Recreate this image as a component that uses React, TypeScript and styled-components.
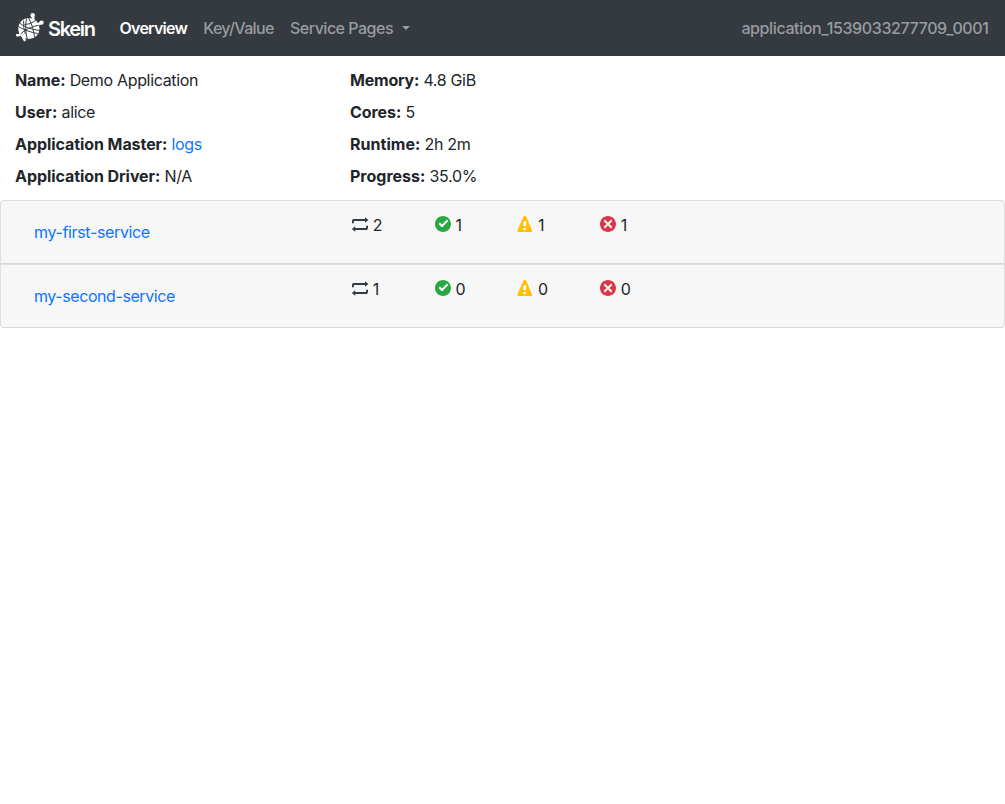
import React from "react";
import styled, { createGlobalStyle } from "styled-components";

const GlobalStyle = createGlobalStyle`
  * { box-sizing: border-box; }
  body { margin: 0; background: #fff; color: #212529; font: 400 16px/24px Inter, "Liberation Sans", sans-serif; }
  a { color: #0c74ff; text-decoration: none; }
`;

const Navbar = styled.nav`
  height: 56px;
  padding: 0 16px;
  display: flex;
  align-items: center;
  background: #343a40;
`;

const Brand = styled.a`
  display: flex;
  align-items: center;
  gap: 4px;
  margin-right: 15.5px;
  svg { display: block; flex: none; margin-top: -2px; }
`;

const BrandName = styled.span`
  width: 48px;
  color: #fff;
  font-size: 20px;
  font-weight: 600;
  line-height: 30px;
  letter-spacing: -1.3px;
  white-space: nowrap;
  padding-top: 2px;
`;

const NavLink = styled.a<{ $active?: boolean; $width: number; $spacing: number }>`
  width: ${(p) => p.$width}px;
  padding: 0 8px;
  white-space: nowrap;
  font-weight: ${(p) => (p.$active ? 600 : 500)};
  letter-spacing: ${(p) => p.$spacing}px;
  && { color: ${(p) => (p.$active ? "#fff" : "#999c9f")}; }
`;

const Caret = styled.span`
  display: inline-block;
  margin-left: 9px;
  vertical-align: 4px;
  border-top: 4.8px solid;
  border-right: 4.8px solid transparent;
  border-left: 4.8px solid transparent;
`;

const AppId = styled.span`
  margin-left: auto;
  margin-right: 0.5px;
  color: #999c9f;
  font-weight: 500;
  letter-spacing: -0.38px;
`;

const Summary = styled.section`
  display: grid;
  grid-template-columns: 335px 1fr;
  padding: 12px 15px;
  row-gap: 8px;
  height: 144px;
`;

const Fact = styled.div<{ $label: number }>`
  white-space: nowrap;
  letter-spacing: -0.33px;
  strong { font-weight: 700; letter-spacing: ${(p) => p.$label}px; }
`;

const Card = styled.div`
  height: 64px;
  display: grid;
  grid-template-columns: 336px repeat(4, 82.66px);
  padding: 12px 15px;
  background: #f7f7f7;
  border: 1px solid #dfdfdf;
  border-bottom-color: #d8d8d8;
  &:first-child { border-radius: 4px 4px 0 0; }
  &:last-child { border-radius: 0 0 4px 4px; }
`;

const ServiceLink = styled.a<{ $spacing: number }>`
  padding: 7px 18px;
  letter-spacing: ${(p) => p.$spacing}px;
`;

const Count = styled.div`
  display: flex;
  align-items: flex-start;
  gap: 4.8px;
  letter-spacing: -0.4px;
`;

const Glyph = styled.svg<{ $color: string }>`
  width: 16px;
  height: 16px;
  margin-top: 3px;
  fill: ${(p) => p.$color};
`;

const icons = {
  loop: { color: "#343a40", box: "0 0 16 16", d: "M13 1.3L16.4 4 13 6.7V4.9H1.9V7.3H0V5Q0 3.1 1.9 3.1H13zM3.2 10.3V12.1H14.1V9.7H16V12Q16 13.9 14.1 13.9H3.2V15.7L-.2 13z" },
  check: { color: "#28a745", box: "0 0 8 8", d: "M4 0c-2.2 0-4 1.8-4 4s1.8 4 4 4 4-1.8 4-4-1.8-4-4-4zm2 1.78l.72.72-3.22 3.22-1.72-1.72.72-.72 1 1 2.5-2.5z" },
  warning: { color: "#ffc107", box: "0 0 16 16", d: "M7.1 0H8.4Q8.9 0 9.1.5L15 14.3V15.6Q15 16 14.6 16H.9Q.5 16 .5 15.6V14.3L6.4.5Q6.6 0 7.1 0zM6.4 5.2V10H9.1V5.2zM6.4 11.8V14H9.1V11.8z" },
  cross: { color: "#dc3545", box: "0 0 8 8", d: "M4 0c-2.2 0-4 1.8-4 4s1.8 4 4 4 4-1.8 4-4-1.8-4-4-4zm-1.5 1.78l1.5 1.5 1.5-1.5.72.72-1.5 1.5 1.5 1.5-.72.72-1.5-1.5-1.5 1.5-.72-.72 1.5-1.5-1.5-1.5.72-.72z" },
};

type IconName = keyof typeof icons;
const order: IconName[] = ["loop", "check", "warning", "cross"];

const Icon = ({ name }: { name: IconName }) => (
  <Glyph $color={icons[name].color} viewBox={icons[name].box} overflow="visible">
    <path fillRule="evenodd" d={icons[name].d} />
  </Glyph>
);

const SkeinLogo = () => (
  <svg width="28" height="30" viewBox="0 0 28 30">
    <g fill="#fff">
      <circle cx="12.9" cy="16.5" r="10.6" />
      <circle cx="16.7" cy="3.2" r="2.2" />
      <circle cx="25.5" cy="10.6" r="2.2" />
    </g>
    <g fill="none" stroke="#fff" strokeWidth="2.6" strokeLinecap="round" strokeLinejoin="round">
      <path d="M16.8 4L17.4 8M20.5 13L25 10.8M5 20L3.8 23L1.2 23.2M6 23L8.6 27.8" />
    </g>
    <g fill="none" stroke="#343a40" strokeWidth="0.95">
      <path d="M3.4 10.8Q9 16.5 23.5 18.5M2.4 14.5Q10 19.5 21.8 21.5M4.5 22Q11 15.5 22.6 13.2M8.4 12.6Q15 12.6 19.6 8.4M10.6 6.4Q8.4 15 11.2 27.2M12.6 6Q17.5 14 18.6 25.4M7.6 8.6Q7 16 9.4 22" />
    </g>
  </svg>
);

const facts = [
  { label: "Name:", value: "Demo Application", spacing: -0.1 },
  { label: "Memory:", value: "4.8 GiB", spacing: -0.2 },
  { label: "User:", value: "alice", spacing: 0.05 },
  { label: "Cores:", value: "5", spacing: -0.05 },
  { label: "Application Master:", value: "logs", link: true, spacing: -0.07 },
  { label: "Runtime:", value: "2h 2m", spacing: 0.03 },
  { label: "Application Driver:", value: "N/A", spacing: -0.07 },
  { label: "Progress:", value: "35.0%", spacing: 0 },
];

const services = [
  { name: "my-first-service", spacing: -0.35, counts: [2, 1, 1, 1] },
  { name: "my-second-service", spacing: -0.42, counts: [1, 0, 0, 0] },
];

export default function App() {
  return (
    <>
      <GlobalStyle />
      <Navbar>
        <Brand href="#">
          <SkeinLogo />
          <BrandName>Skein</BrandName>
        </Brand>
        <NavLink href="#" $active $width={83.7} $spacing={-0.75}>Overview</NavLink>
        <NavLink href="#" $width={86.8} $spacing={-0.65}>Key/Value</NavLink>
        <NavLink href="#" $width={137} $spacing={-0.5}>Service Pages<Caret /></NavLink>
        <AppId>application_1539033277709_0001</AppId>
      </Navbar>
      <Summary>
        {facts.map((f) => (
          <Fact key={f.label} $label={f.spacing}>
            <strong>{f.label}</strong> {f.link ? <a href="#">{f.value}</a> : f.value}
          </Fact>
        ))}
      </Summary>
      <main>
        {services.map((s) => (
          <Card key={s.name}>
            <ServiceLink href="#" $spacing={s.spacing}>{s.name}</ServiceLink>
            {order.map((name, i) => (
              <Count key={name}><Icon name={name} />{s.counts[i]}</Count>
            ))}
          </Card>
        ))}
      </main>
    </>
  );
}
